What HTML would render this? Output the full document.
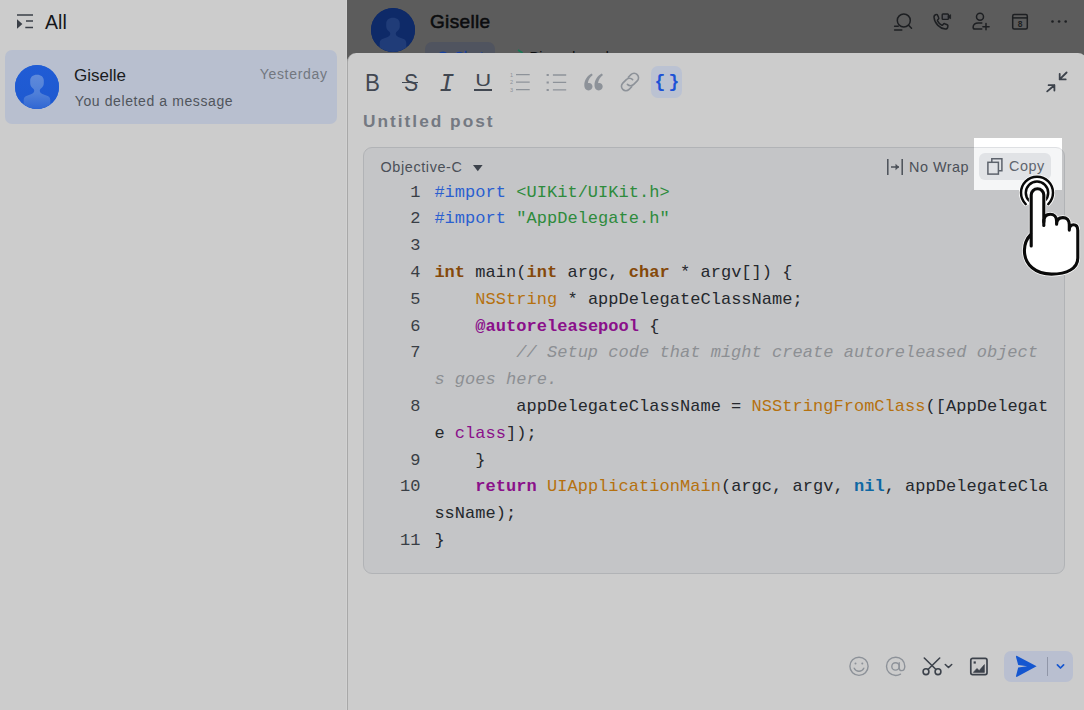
<!DOCTYPE html>
<html lang="en">
<head>
<meta charset="utf-8">
<title>Untitled post</title>
<style>
*{box-sizing:border-box;margin:0;padding:0}
html,body{width:1084px;height:710px;overflow:hidden}
body{position:relative;background:#cccccc;font-family:"Liberation Sans",sans-serif;color:#1a1c20}
.abs{position:absolute}
svg{position:absolute;overflow:visible}
/* sidebar */
#side{position:absolute;left:0;top:0;width:347px;height:710px;background:#cccccc;border-right:1px solid #d1d1d1}
#side .ttl{position:absolute;left:45px;top:10px;font-size:19.5px;line-height:24px;color:#14161a;letter-spacing:.1px}
#item{position:absolute;left:5px;top:50px;width:332px;height:73.500px;border-radius:7px;background:#b8bfcf}
#item .name{position:absolute;left:69px;top:14.700px;font-size:17px;line-height:22px;color:#181b20}
#item .sub{position:absolute;left:69.800px;top:41.700px;font-size:14px;line-height:18px;color:#50555c;letter-spacing:.6px;white-space:nowrap}
#item .time{position:absolute;right:9.300px;top:15px;font-size:14px;line-height:18px;color:#727780;letter-spacing:.7px;white-space:nowrap}
.av{position:absolute;border-radius:50%;overflow:hidden}
.av svg{left:0;top:0}
/* main */
#dark{position:absolute;left:347px;top:0;width:737px;height:70px;background:#5c5c5c;overflow:hidden}
#dark .name{position:absolute;left:83px;top:10px;font-size:19px;line-height:24px;color:#0b0c0e;letter-spacing:.34px;-webkit-text-stroke:.55px #0b0c0e}
#tab1{position:absolute;left:78px;top:42px;width:70px;height:28px;border-radius:7px;background:#50545f}
#tab1 span{position:absolute;left:29px;top:5.500px;font-size:14px;line-height:18px;color:#163f9c;-webkit-text-stroke:.3px #163f9c}
#tab2{position:absolute;left:182.500px;top:47.500px;font-size:14px;line-height:18px;color:#0b0c0e;letter-spacing:.45px;white-space:nowrap}
#panel{position:absolute;left:347px;top:52.500px;width:739.500px;height:670px;background:#cccccc;border-radius:9px 9px 0 0;border-left:1px solid #a8a8a8}
#title{position:absolute;left:363px;top:109px;font-size:17.300px;line-height:24px;font-weight:bold;color:#747982;letter-spacing:2px;white-space:nowrap}
.tb{position:absolute;white-space:nowrap;color:#414751;line-height:1}
#code{position:absolute;left:363px;top:147px;width:702px;height:427px;border:1px solid #b1b3b6;border-radius:9px;background:#c4c5c7}
.lang{position:absolute;left:16.500px;top:9px;font-size:14.400px;line-height:20px;color:#4b5058;letter-spacing:.62px;white-space:nowrap}
pre,.nums{font-family:"Liberation Mono","DejaVu Sans Mono",monospace;font-size:17px;line-height:26.820px;position:absolute;top:31.500px;white-space:pre;letter-spacing:.03px}
pre{left:70.400px;color:#25282d}
.nums{left:0;width:56.500px;text-align:right;color:#393e45}
.b{color:#2a5fd0}.g{color:#2e8b3c}.k{color:#85490a;font-weight:bold}.o{color:#b5710f}.p{color:#8a108a;font-weight:bold}.pp{color:#8a108a}.c{color:#8c8f93;font-style:italic}.n{color:#0f68a3;font-weight:bold}
.lbl{position:absolute;font-size:14.400px;line-height:20px;white-space:nowrap;letter-spacing:.5px}
</style>
</head>
<body>
<div id="side">
  <svg style="left:16px;top:12px" width="20" height="20" viewBox="0 0 20 20" fill="none" stroke="#3a3f47" stroke-width="1.500" stroke-linecap="butt"><path d="M1 3h16M10 9h7M9.300 15.600h7.700"/><path d="M1 7.300l5.400 4.700-5.400 4.700z" fill="#3a3f47" stroke="none"/></svg>
  <div class="ttl">All</div>
  <div id="item">
    <div class="av" style="left:10px;top:15px;width:44px;height:44px;background:#1f5fd6">
      <svg width="44" height="44" viewBox="0 0 44 44"><defs><linearGradient id="g1" x1="0" y1="0" x2="0" y2="1"><stop offset="0" stop-color="#205cd5"/><stop offset="1" stop-color="#1e59d0"/></linearGradient><linearGradient id="g2" x1="0" y1="0" x2="0" y2="1"><stop offset="0" stop-color="#5f8ada"/><stop offset=".55" stop-color="#4f7fd8"/><stop offset="1" stop-color="#2f66d3"/></linearGradient></defs><rect width="44" height="44" fill="url(#g1)"/><path d="M22 9.800C17.800 9.800 15.200 12 15.200 15.600V18.200C15.200 20.600 16.600 22.400 18.600 24C19.600 25 19.400 27 18.200 28C16.500 29.300 13 30 10.800 31.200C9.200 32.200 8.700 33.500 8.700 35.500V44H35.300V35.500C35.300 33.500 34.800 32.200 33.200 31.200C31 30 27.500 29.300 25.800 28C24.600 27 24.400 25 25.400 24C27.400 22.400 28.800 20.600 28.800 18.200V15.600C28.800 12 26.200 9.800 22 9.800Z" fill="url(#g2)"/></svg>
    </div>
    <div class="name">Giselle</div>
    <div class="sub">You deleted a message</div>
    <div class="time">Yesterday</div>
  </div>
</div>

<div id="dark">
  <div class="av" style="left:24px;top:8px;width:44px;height:44px;background:#0e2a68">
    <svg width="44" height="44" viewBox="0 0 44 44"><rect width="44" height="44" fill="#0e2a68"/><path d="M22 9.800C17.800 9.800 15.200 12 15.200 15.600V18.200C15.200 20.600 16.600 22.400 18.600 24C19.600 25 19.400 27 18.200 28C16.500 29.300 13 30 10.800 31.200C9.200 32.200 8.700 33.500 8.700 35.500V44H35.300V35.500C35.300 33.500 34.800 32.200 33.200 31.200C31 30 27.500 29.300 25.800 28C24.600 27 24.400 25 25.400 24C27.400 22.400 28.800 20.600 28.800 18.200V15.600C28.800 12 26.200 9.800 22 9.800Z" fill="#203c78"/></svg>
  </div>
  <div class="name">Giselle</div>
  <div id="tab1"><svg style="left:10.500px;top:8.500px" width="14" height="14" viewBox="0 0 14 14"><circle cx="7" cy="7" r="6.500" fill="#163f9c"/></svg><span>Chat</span></div>
  <svg style="left:170px;top:50px" width="8" height="12" viewBox="0 0 8 12"><path d="M1 0l4 2.500-1 3" fill="none" stroke="#177a55" stroke-width="1.600"/></svg>
  <div id="tab2">Pinned cards</div>
  <!-- header icons -->
  <svg style="left:545px;top:11px" width="22" height="22" viewBox="0 0 22 22" fill="none" stroke="#1d1f22" stroke-width="1.500" stroke-linecap="round"><circle cx="11.800" cy="9.500" r="6.500"/><path d="M16.600 14.200l2.900 3M2.600 15.300h3.600M2.600 18.900h7.200"/></svg>
  <svg style="left:585px;top:11px" width="22" height="22" viewBox="0 0 22 22" fill="none" stroke="#1d1f22" stroke-width="1.500" stroke-linecap="round" stroke-linejoin="round"><path d="M4.200 3.600c-1.400 .3-2.300 1.200-2.200 2.600 .3 3.200 1.700 6 3.900 8.200s4.700 3.500 7.300 3.600c1.500 0 2.400-.8 2.600-2.200l.1-1c0-.5-.2-.9-.7-1.100l-2.500-1c-.4-.2-.9-.1-1.200 .3l-.8 .9c-.3 .3-.7 .4-1.100 .200-1.800-1-3.200-2.400-4.100-4.200-.2-.4-.1-.8 .2-1.100l.8-.8c.3-.3 .4-.8 .2-1.200l-1.100-2.600c-.2-.5-.8-.8-1.400-.6z"/><rect x="10.200" y="3" width="6.200" height="5.400" rx=".8" fill="#3f4144" stroke="#5c5c5c" stroke-width="2.600"/><rect x="10.200" y="3" width="6.200" height="5.400" rx=".8" fill="#55565a" stroke-width="1.400"/><path d="M16.600 4.900l2-1.200v4l-2-1.200z" fill="#1d1f22" stroke-width=".8"/></svg>
  <svg style="left:624px;top:11px" width="22" height="22" viewBox="0 0 22 22" fill="none" stroke="#1d1f22" stroke-width="1.500" stroke-linecap="round" stroke-linejoin="round"><circle cx="9" cy="5.700" r="3.500"/><path d="M10.800 11.900H7.200c-3 0-5.100 1.900-5.100 4.400 0 1.100 .7 1.800 1.800 1.800h6.900M15 12.600v6.200M11.900 15.700h6.200"/></svg>
  <svg style="left:664px;top:11px" width="22" height="22" viewBox="0 0 22 22" fill="none" stroke="#1d1f22" stroke-width="1.500" stroke-linejoin="round"><rect x="1.700" y="3.600" width="14.600" height="14.400" rx="1.500"/><path d="M1.700 6.900h14.600"/><text x="9" y="15.900" text-anchor="middle" font-family="Liberation Sans,sans-serif" font-size="8.500" font-weight="bold" fill="#1d1f22" stroke="none">8</text></svg>
  <svg style="left:703px;top:19px" width="18" height="5" viewBox="0 0 18 5" fill="#1d1f22"><circle cx="2.500" cy="2.500" r="1.300"/><circle cx="9.100" cy="2.500" r="1.300"/><circle cx="15.700" cy="2.500" r="1.300"/></svg>
</div>

<div id="panel"></div>
<!-- format toolbar -->
<div class="tb" style="left:365.200px;top:70.900px;font-size:24px;transform:scaleX(.93);transform-origin:0 0">B</div>
<div class="tb" style="left:402.500px;top:70.900px;font-size:24px;width:16px;text-align:center"><span style="display:inline-block;transform:scaleX(.88)">S</span></div>
<div class="abs" style="left:402.300px;top:81.500px;width:16.200px;height:1.500px;background:#414751"></div>
<div class="tb" style="left:439.300px;top:71.500px;font-size:25px;font-family:'Liberation Mono',monospace;font-style:italic">I</div>
<div class="tb" style="left:474.200px;top:71.800px;font-size:17.200px;width:18.300px;text-align:center"><span style="display:inline-block;transform:scaleX(1.28)">U</span></div>
<div class="abs" style="left:474.200px;top:89.200px;width:18.300px;height:1.600px;background:#414751"></div>
<svg style="left:509px;top:72px" width="22" height="20" viewBox="0 0 22 20"><g style="font-family:'Liberation Sans',sans-serif" font-size="5.500" fill="#8d9299"><text x="1" y="4.600">1</text><text x="1" y="12.100">2</text><text x="1" y="19.600">3</text></g><path d="M7 2.600h13.700M7 10.100h13.700M7 17.600h13.700" stroke="#8d9299" stroke-width="1.400"/></svg>
<svg style="left:546px;top:72px" width="22" height="20" viewBox="0 0 22 20"><path d="M.6 3h2.200M.6 10.400h2.200M.6 17.900h2.200" stroke="#8d9299" stroke-width="2"/><path d="M6.900 3h13.300M6.900 10.400h13.300M6.900 17.900h13.300" stroke="#8d9299" stroke-width="1.400"/></svg>
<svg style="left:584px;top:73px" width="20" height="18" viewBox="0 0 20 18" fill="#8d9299"><path d="M7.500 .6C3.400 2.700 .3 7 .3 12.300c0 3 1.700 5.200 4.300 5.200 2.200 0 3.900-1.700 3.900-3.900 0-2.100-1.500-3.600-3.500-3.600-.5 0-.9 .1-1.200 .2 .3-3.200 2.100-6.300 5-8.300z"/><path d="M17.700 .6c-4.100 2.100-7.200 6.400-7.200 11.700 0 3 1.700 5.200 4.300 5.200 2.200 0 3.900-1.700 3.900-3.900 0-2.100-1.500-3.600-3.500-3.600-.5 0-.9 .1-1.200 .2 .3-3.200 2.100-6.300 5-8.300z"/></svg>
<svg style="left:620px;top:72px" width="20" height="20" viewBox="0 0 20 20" fill="none" stroke="#8d9299" stroke-width="1.600" stroke-linecap="round"><path d="M8.300 5.200l2.600-2.600c1.800-1.800 4.600-1.800 6.300 0 1.800 1.700 1.800 4.500 0 6.300l-3.500 3.500c-1.800 1.800-4.600 1.800-6.300 0"/><path d="M11.700 14.800l-2.600 2.600c-1.800 1.800-4.600 1.800-6.300 0-1.800-1.700-1.800-4.500 0-6.300l3.500-3.500c1.800-1.800 4.600-1.800 6.300 0"/></svg>
<div class="abs" style="left:650.700px;top:66px;width:31.300px;height:32px;border-radius:7px;background:#bbc2d2"></div>
<div class="tb" style="left:654.600px;top:72.500px;font-size:18px;font-family:'Liberation Mono',monospace;font-weight:bold;color:#1d52d6;letter-spacing:3px">{}</div>
<!-- collapse -->
<svg style="left:1045px;top:70px" width="24" height="24" viewBox="0 0 24 24" fill="none" stroke="#3c424b" stroke-width="1.800" stroke-linecap="round" stroke-linejoin="round"><path d="M21.600 2.500l-7 6.900M14.700 3.800v5.600h6M2.200 21.400l7.200-6.200M3.600 15.200h5.800v5.400"/></svg>

<div id="title">Untitled post</div>

<div id="code">
  <div class="lang">Objective-C</div>
  <svg style="left:108.500px;top:16.500px" width="10" height="7" viewBox="0 0 10 7"><path d="M0 0h9.600L4.800 6.200z" fill="#3d434c"/></svg>
  <svg style="left:522px;top:10px" width="18" height="18" viewBox="0 0 18 18" fill="none" stroke="#4b5058" stroke-width="1.500"><path d="M1.800 1v16M16.200 1v16M5 9h8"/><path d="M9.500 5.800L13 9l-3.500 3.200z" fill="#4b5058" stroke="none"/></svg>
  <div class="lbl" style="left:545px;top:9px;color:#4b5058">No Wrap</div>
  <div class="nums">1
2
3
4
5
6
7

8

9
10

11</div>
<pre><span class="b">#import</span> <span class="g">&lt;UIKit/UIKit.h&gt;</span>
<span class="b">#import</span> <span class="g">"AppDelegate.h"</span>

<span class="k">int</span> main(<span class="k">int</span> argc, <span class="k">char</span> * argv[]) {
    <span class="o">NSString</span> * appDelegateClassName;
    <span class="p">@autoreleasepool</span> {
        <span class="c">// Setup code that might create autoreleased object</span>
<span class="c">s goes here.</span>
        appDelegateClassName = <span class="o">NSStringFromClass</span>([AppDelegat
e <span class="pp">class</span>]);
    }
    <span class="p">return</span> <span class="o">UIApplicationMain</span>(argc, argv, <span class="n">nil</span>, appDelegateCla
ssName);
}</pre>
</div>

<!-- spotlight on Copy -->
<div class="abs" style="left:974px;top:138px;width:88px;height:52px;background:#ffffff;overflow:hidden">
  <div class="abs" style="left:-611px;top:9px;width:702px;height:427px;border:1px solid #dee0e3;border-radius:9px;background:#f5f6f7"></div>
  <div class="abs" style="left:5px;top:15px;width:71.600px;height:27px;border-radius:6px;background:#e1e3e6"></div>
  <svg style="left:13px;top:19.500px" width="16" height="18" viewBox="0 0 16 18" fill="none" stroke="#5d636c" stroke-width="1.500" stroke-linejoin="miter"><path d="M4.800 4.300V.8H14.900V12.700H11.400"/><rect x=".9" y="4.300" width="10.500" height="11.800"/></svg>
  <div class="lbl" style="left:35px;top:18.300px;color:#5f656e">Copy</div>
</div>

<!-- hand cursor -->
<svg style="left:1010px;top:170px" width="74" height="110" viewBox="1010 170 74 110" fill="none" stroke="#0a0a0a" stroke-linecap="round" stroke-linejoin="round">
  <path d="M1025.700 204.100A16 16 0 1 1 1048.300 204.100" stroke="#ffffff" stroke-width="4.200"/>
  <path d="M1029.100 200.700A11.200 11.200 0 1 1 1044.900 200.700" stroke="#ffffff" stroke-width="8"/>
  <path d="M1025.700 204.100A16 16 0 1 1 1048.300 204.100" stroke-width="2.500"/>
  <path d="M1029.100 200.700A11.200 11.200 0 1 1 1044.900 200.700" stroke-width="2.500"/>
  <path id="hp" d="M1031.200 246V195.100a6.300 6.300 0 0 1 12.600 0V222c0-5 2.500-7.800 6.400-7.800s6.400 2.800 6.400 7v3c0-4.500 2.600-6.600 6.300-6.600s6.400 2.500 6.400 7v5.500c0-3.600 1.600-5.300 4.200-5.300s4.300 2 4.300 5.800V258C1077.800 268.500 1067 274.100 1051.500 274.100C1036 274.100 1024.400 265 1024.400 250.500C1024.400 243.500 1027 238 1031.200 233.800z" fill="#ffffff" stroke="#ffffff" stroke-width="4.600"/>
  <path d="M1031.200 246V195.100a6.300 6.300 0 0 1 12.600 0V222c0-5 2.500-7.800 6.400-7.800s6.400 2.800 6.400 7v3c0-4.500 2.600-6.600 6.300-6.600s6.400 2.500 6.400 7v5.500c0-3.600 1.600-5.300 4.200-5.300s4.300 2 4.300 5.800V258C1077.800 268.500 1067 274.100 1051.500 274.100C1036 274.100 1024.400 265 1024.400 250.500C1024.400 243.500 1027 238 1031.200 233.800" fill="#ffffff" stroke-width="3.100"/>
  <path d="M1043.800 220v5.500" stroke-width="3.100"/>
</svg>

<!-- bottom toolbar -->
<svg style="left:848px;top:655px" width="22" height="22" viewBox="0 0 22 22" fill="none" stroke="#8d9299" stroke-width="1.400" stroke-linecap="round"><circle cx="11" cy="11.300" r="9.100"/><path d="M6.200 13.200c1 2 2.700 3 4.800 3s3.800-1 4.800-3"/><circle cx="7.500" cy="8.600" r="1" fill="#8d9299" stroke="none"/><circle cx="14.300" cy="8.600" r="1" fill="#8d9299" stroke="none"/></svg>
<svg style="left:885px;top:655px" width="22" height="22" viewBox="0 0 22 22" fill="none" stroke="#8d9299" stroke-width="1.400" stroke-linecap="round"><circle cx="10.500" cy="11.400" r="3.700"/><path d="M14.200 7.700v5.200c0 1.700 1 2.700 2.500 2.700 1.700 0 3.100-1.600 3.100-4.300 0-5.100-4-9.100-9.100-9.100s-9.200 4-9.200 9.100 4.100 9.200 9.200 9.200c1.800 0 3.400-.5 4.800-1.300"/></svg>
<svg style="left:921px;top:656px" width="32" height="22" viewBox="0 0 32 22" fill="none" stroke="#3c424b" stroke-width="1.600" stroke-linecap="round" stroke-linejoin="round"><circle cx="5" cy="15.700" r="2.900"/><circle cx="17" cy="15.700" r="2.900"/><path d="M3.300 2L15 13.500M18.700 2L7 13.500"/><path d="M24.300 8.500l3.200 3 3.200-3"/></svg>
<svg style="left:968px;top:656px" width="22" height="22" viewBox="0 0 22 22" fill="none" stroke="#3c424b" stroke-width="1.700" stroke-linejoin="round"><rect x="2.800" y="2.400" width="16.200" height="16.200" rx="1.800"/><path d="M5.300 16.400l3.600-4 2.300 2.200 5.200-6v7.800z" fill="#3c424b" stroke-width=".6"/><rect x="5.600" y="5.400" width="2.200" height="2.200" fill="#3c424b" stroke="none"/></svg>
<div class="abs" style="left:1004px;top:651px;width:69px;height:31px;border-radius:7px;background:#b9bfd0"></div>
<svg style="left:1014px;top:654px" width="26" height="25" viewBox="0 0 26 25"><path d="M3.100 2l19.500 10.300L3.100 22.800c-.7 .4-1.300-.2-1.100-.9l2.200-8.400 9-1.200-9-1.200L2 2.900c-.2-.7 .4-1.300 1.100-.9z" fill="#1456d0"/></svg>
<div class="abs" style="left:1047px;top:657px;width:1px;height:18.500px;background:#9096a8"></div>
<svg style="left:1055px;top:662px" width="12" height="9" viewBox="0 0 12 9" fill="none" stroke="#1456d0" stroke-width="1.700" stroke-linecap="round" stroke-linejoin="round"><path d="M2.400 2.900l3.100 3.100 3.100-3.100"/></svg>
</body>
</html>
